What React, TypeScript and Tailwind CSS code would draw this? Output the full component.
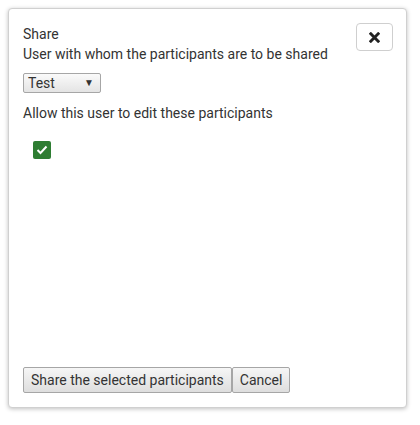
export default function App() {
  return (
    <div className="w-[420px] h-[425px] bg-white pt-2 pl-2 font-['Roboto',sans-serif] text-[14px] text-[#333]">
      <div className="flex h-[400px] w-[399px] flex-col rounded-[4px] border border-[#d0d0d0] bg-white pb-[14px] pl-[14px] pr-[13px] pt-[15px] shadow-[0_1px_4px_rgba(0,0,0,0.25)]">
        {/* Header */}
        <div className="flex items-start justify-between">
          <div className="leading-[20px]">
            <p>Share</p>
            <p>User with whom the participants are to be shared</p>
          </div>
          <button
            type="button"
            className="-mt-[1px] flex h-[28px] w-[37px] items-center justify-center rounded-[4px] border border-[#cfcfcf] bg-white"
          >
            <svg width="11" height="11" viewBox="0 0 12 12">
              <path d="M2 2 L10 10 M10 2 L2 10" stroke="#222" strokeWidth="3.2" strokeLinecap="square" />
            </svg>
          </button>
        </div>

        {/* User select */}
        <div className="mt-[9px] flex h-[20px] w-[78px] items-center justify-between rounded-[2px] border border-[#a6a6a6] bg-gradient-to-b from-[#fafafa] to-[#e4e4e4] pl-[4px] pr-[6px] leading-none">
          <span>Test</span>
          <span className="text-[10px] text-[#333]">▼</span>
        </div>

        <p className="mt-[10px] leading-[20px]">Allow this user to edit these participants</p>

        <div className="ml-[10px] mt-[18px] flex h-[18px] w-[18px] items-center justify-center rounded-[2px] bg-[#2e7d32]">
          <svg width="12" height="10" viewBox="0 0 12 10">
            <path d="M1.5 5 L4.5 8 L10.5 1.5" fill="none" stroke="white" strokeWidth="2" />
          </svg>
        </div>

        <div className="flex-1" />

        {/* Actions */}
        <div className="flex">
          <button
            type="button"
            className="h-[26px] rounded-[2px] border border-[#a6a6a6] bg-gradient-to-b from-[#f6f6f6] to-[#dedede] px-[7px] leading-none"
          >
            Share the selected participants
          </button>
          <button
            type="button"
            className="h-[26px] rounded-[2px] border border-[#a6a6a6] bg-gradient-to-b from-[#f6f6f6] to-[#dedede] px-[7px] leading-none"
          >
            Cancel
          </button>
        </div>
      </div>
    </div>
  );
}
